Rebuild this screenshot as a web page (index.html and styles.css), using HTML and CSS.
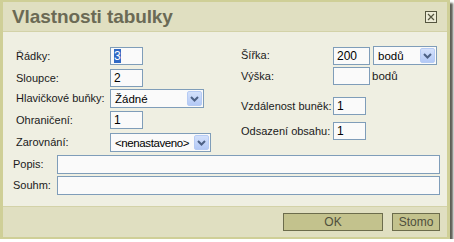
FILE: index.html
```html
<!DOCTYPE html>
<html lang="cs">
<head>
    <meta charset="UTF-8">
    <title>Vlastnosti tabulky</title>
    <link rel="stylesheet" href="styles.css">
</head>
<body>
    <div class="dialog">
        <div class="header">
            <h1 class="title">Vlastnosti tabulky</h1>
            <span class="close">
                <svg width="12" height="12" viewBox="0 0 12 12">
                    <rect x="0.5" y="0.5" width="11" height="11" fill="#ecebd6" stroke="#55553f"/>
                    <path d="M3 3 L9 9 M9 3 L3 9" stroke="#55553f" stroke-width="1.2"/>
                </svg>
            </span>
        </div>

        <div class="content">
            <div class="columns">
                <div class="grid left">
                    <label>Řádky:</label>
                    <div class="field w33"><span class="sel">3</span></div>

                    <label>Sloupce:</label>
                    <div class="field w33">2</div>

                    <label>Hlavičkové buňky:</label>
                    <div class="select w94">
                        <span>Žádné</span>
                        <span class="arrow"><svg width="9" height="6" viewBox="0 0 9 6"><path d="M1 1 L4.5 4.5 L8 1" fill="none" stroke="#4d6185" stroke-width="2"/></svg></span>
                    </div>

                    <label>Ohraničení:</label>
                    <div class="field w33">1</div>

                    <label>Zarovnání:</label>
                    <div class="select w101">
                        <span class="tight">&lt;nenastaveno&gt;</span>
                        <span class="arrow"><svg width="9" height="6" viewBox="0 0 9 6"><path d="M1 1 L4.5 4.5 L8 1" fill="none" stroke="#4d6185" stroke-width="2"/></svg></span>
                    </div>
                </div>

                <div class="grid right">
                    <label>Šířka:</label>
                    <div class="pair">
                        <div class="field w37">200</div>
                        <div class="select w64">
                            <span>bodů</span>
                            <span class="arrow"><svg width="9" height="6" viewBox="0 0 9 6"><path d="M1 1 L4.5 4.5 L8 1" fill="none" stroke="#4d6185" stroke-width="2"/></svg></span>
                        </div>
                    </div>

                    <label>Výška:</label>
                    <div class="pair">
                        <div class="field w37"></div>
                        <span class="unit">bodů</span>
                    </div>

                    <label>Vzdálenost buněk:</label>
                    <div class="field w33">1</div>

                    <label>Odsazení obsahu:</label>
                    <div class="field w33">1</div>
                </div>
            </div>

            <div class="wide">
                <label>Popis:</label>
                <div class="field long"></div>
                <label>Souhm:</label>
                <div class="field long"></div>
            </div>
        </div>

        <div class="footer">
            <button class="btn ok">OK</button>
            <button class="btn">Stomo</button>
        </div>
    </div>
</body>
</html>
```

FILE: styles.css
```css
body {
    margin: 0;
    background: #ffffff;
    font-family: "Liberation Sans", Arial, sans-serif;
    font-size: 11px;
    color: #1a1a1a;
}
.dialog {
    width: 444px;
    height: 235px;
    border-style: solid;
    border-color: #cfcf97;
    border-width: 2px 3px 2px 3px;
    background: #efefe2;
    box-shadow: 3px 3px 2px rgba(40, 40, 30, 0.75);
    display: flex;
    flex-direction: column;
}
.header {
    height: 29px;
    background: #e0dfc1;
    border-bottom: 1px solid #d3d2a8;
    display: flex;
    align-items: center;
    justify-content: space-between;
    padding: 0 10px 0 9px;
}
.title {
    margin: 0;
    font-size: 19px;
    font-weight: bold;
    color: #6b6a55;
    letter-spacing: -0.1px;
}
.close {
    display: flex;
    margin-top: 1px;
}
.content {
    flex: 1;
    padding: 14px 7px 0 10px;
}
.columns {
    display: flex;
}
.grid {
    display: grid;
    align-items: start;
}
.grid label {
    height: 18px;
    line-height: 18px;
    white-space: nowrap;
}
.left {
    width: 228px;
    padding-left: 3px;
    box-sizing: border-box;
    margin-top: 1px;
    grid-template-columns: 94px auto;
    grid-template-rows: 22px 20px 22px 22px 19px;
}
.right {
    grid-template-columns: 92px auto;
    grid-template-rows: 21px 30px 25px 19px;
}
.field {
    height: 18px;
    box-sizing: border-box;
    border: 1px solid #7f9db9;
    background: #fafafa;
    padding: 0 3px;
    line-height: 16px;
    font-size: 12px;
    color: #000;
}
.sel {
    background: #316ac5;
    color: #fff;
}
.w33 { width: 33px; }
.w37 { width: 37px; }
.w64 { width: 64px; }
.w94 { width: 94px; }
.w101 { width: 101px; }
.select {
    height: 19px;
    box-sizing: border-box;
    border: 1px solid #7f9db9;
    background: #fafafa;
    display: flex;
    align-items: center;
    justify-content: space-between;
    padding: 0 1px 0 4px;
    font-size: 11.5px;
    color: #000;
}
.tight {
    letter-spacing: -0.4px;
}
.arrow {
    width: 15px;
    height: 15px;
    box-sizing: border-box;
    border: 1px solid #b6cbf4;
    border-radius: 2px;
    background: linear-gradient(#d4e1fb, #b3c9f6);
    display: flex;
    align-items: center;
    justify-content: center;
}
.pair {
    display: flex;
    align-items: center;
    gap: 3px;
}
.unit {
    margin-left: -1px;
    font-size: 11.5px;
}
.wide {
    display: grid;
    grid-template-columns: 44px 1fr;
    row-gap: 2px;
    margin-top: 3px;
}
.wide label {
    height: 19px;
    line-height: 19px;
}
.long {
    height: 19px;
}
.footer {
    height: 30px;
    background: #e0dfc1;
    border-top: 1px solid #d3d2a8;
    display: flex;
    align-items: center;
    justify-content: flex-end;
    gap: 9px;
    padding-right: 7px;
}
.btn {
    height: 18px;
    padding: 0;
    border: 1px solid #6c6c4c;
    background: #c3c28d;
    font-family: "Liberation Sans", Arial, sans-serif;
    font-size: 12px;
    color: #4f4f3c;
    line-height: 16px;
}
.ok { width: 100px; }
.btn:not(.ok) { width: 48px; }
```
